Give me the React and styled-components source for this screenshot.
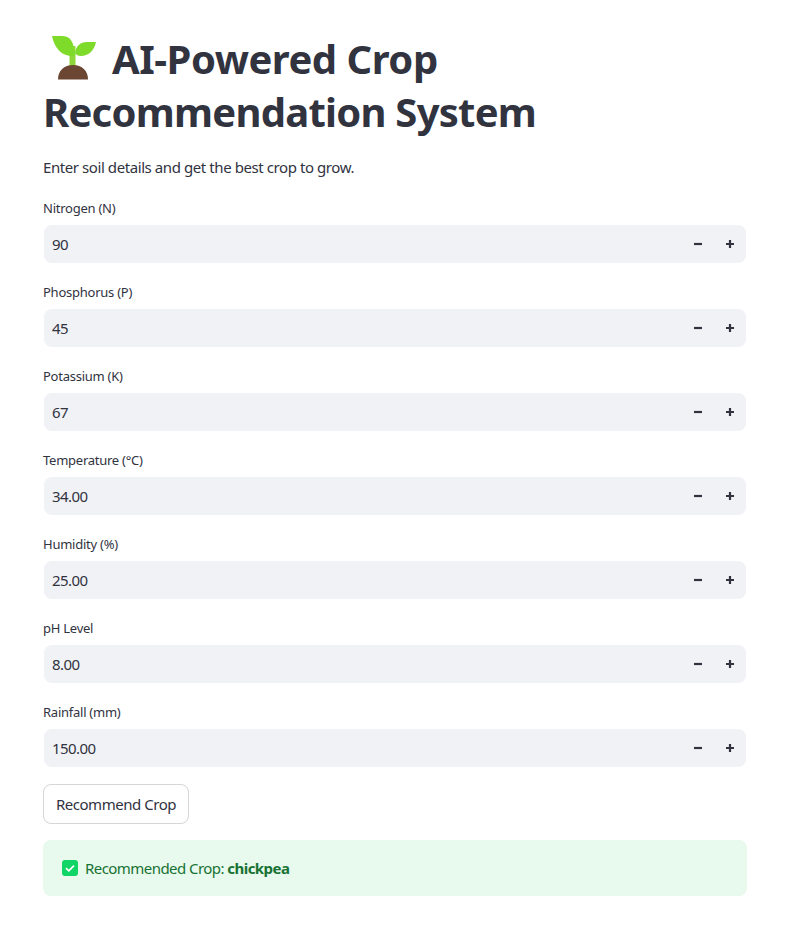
import { createGlobalStyle, styled } from "styled-components"

const fields = [
  { label: "Nitrogen (N)", value: "90" },
  { label: "Phosphorus (P)", value: "45" },
  { label: "Potassium (K)", value: "67" },
  { label: "Temperature (°C)", value: "34.00" },
  { label: "Humidity (%)", value: "25.00" },
  { label: "pH Level", value: "8.00" },
  { label: "Rainfall (mm)", value: "150.00" }
]

const Global = createGlobalStyle`
  html, body {
    margin: 0;
    background: #fff;
    color: #31333f;
    font-family: "Noto Sans", "Liberation Sans", sans-serif;
  }
`

const Main = styled.main`
  box-sizing: border-box;
  width: 793px;
  height: 935px;
  padding: 32px 46px 0 43px;
  display: flex;
  flex-direction: column;
`

const Title = styled.h1`
  margin: 0;
  font-size: 40px;
  line-height: 53px;
  font-weight: 700;
  letter-spacing: -0.75px;
  color: #31333f;
`

const TitleLead = styled.span`
  letter-spacing: -0.48px;
`

const Sprout = styled.svg`
  width: 44px;
  height: 44px;
  margin: 0 16px 0 9px;
  vertical-align: -6px;
`

const Intro = styled.p`
  margin: 17px 0 0;
  font-size: 15px;
  line-height: 24px;
  letter-spacing: -0.42px;
`

const Fields = styled.div`
  margin-top: 19px;
  display: flex;
  flex-direction: column;
  gap: 19px;
`

const Field = styled.div`
  display: flex;
  flex-direction: column;
`

const Label = styled.label`
  font-size: 13px;
  line-height: 20px;
  height: 20px;
  margin-bottom: 7px;
  letter-spacing: -0.25px;
`

const InputBox = styled.div`
  height: 38px;
  margin: 0 1px;
  border-radius: 8px;
  background: #f0f2f6;
  display: flex;
  align-items: center;
  padding: 0 0 0 8px;
`

const Value = styled.span`
  flex: 1;
  font-size: 15px;
  letter-spacing: -0.55px;
`

const StepButton = styled.span`
  width: 32px;
  height: 38px;
  display: flex;
  align-items: center;
  justify-content: center;
`

const Glyph = styled.svg`
  width: 10px;
  height: 10px;
`

const Submit = styled.button`
  box-sizing: border-box;
  align-self: flex-start;
  width: 146px;
  height: 40px;
  margin-top: 17px;
  padding: 0;
  background: #fff;
  border: 1px solid #d5d6d9;
  border-radius: 8px;
  color: #31333f;
  font-family: inherit;
  font-size: 15px;
  letter-spacing: -0.46px;
`

const Alert = styled.div`
  height: 56px;
  margin-top: 16px;
  padding: 0 19px;
  border-radius: 8px;
  background: #e8f9ee;
  color: #177233;
  display: flex;
  align-items: center;
  gap: 7px;
  font-size: 15px;
  letter-spacing: -0.55px;
`

const Check = styled.svg`
  width: 16px;
  height: 16px;
`

function Stepper({ kind }) {
  return (
    <StepButton>
      <Glyph viewBox="0 0 10 10">
        <path d={kind === "minus" ? "M1 5h8" : "M1 5h8M5 1v8"} stroke="#31333f" strokeWidth="2.2" />
      </Glyph>
    </StepButton>
  )
}

export default function App() {
  return (
    <Main>
      <Global />
      <Title>
        <Sprout viewBox="0 0 44 44">
          <path d="M17.500 10h6v23h-6z" fill="#8ed63a" />
          <path d="M0 0h10c8 0 12 5 13 20C11 21 3 14 0 0z" fill="#7fdb2a" />
          <path d="M23 17c1-7 5-11 12-11h9c-2 9-8 14-15 14-3 0-5-1-6-3z" fill="#7fdb2a" />
          <path d="M6 43.500c0-9 6-14.500 15-14.500s15 5.500 15 14.500z" fill="#6b4632" />
        </Sprout>
        <TitleLead>AI-Powered Crop</TitleLead> Recommendation System
      </Title>
      <Intro>Enter soil details and get the best crop to grow.</Intro>
      <Fields>
        {fields.map((f) => (
          <Field key={f.label}>
            <Label>{f.label}</Label>
            <InputBox>
              <Value>{f.value}</Value>
              <Stepper kind="minus" />
              <Stepper kind="plus" />
            </InputBox>
          </Field>
        ))}
      </Fields>
      <Submit>Recommend Crop</Submit>
      <Alert>
        <Check viewBox="0 0 16 16">
          <rect width="16" height="16" rx="3" fill="#0fd466" />
          <path d="M4 8.200l2.800 2.600L12 5.600" fill="none" stroke="#fff" strokeWidth="1.7" />
        </Check>
        <span>Recommended Crop: <b>chickpea</b></span>
      </Alert>
    </Main>
  )
}
